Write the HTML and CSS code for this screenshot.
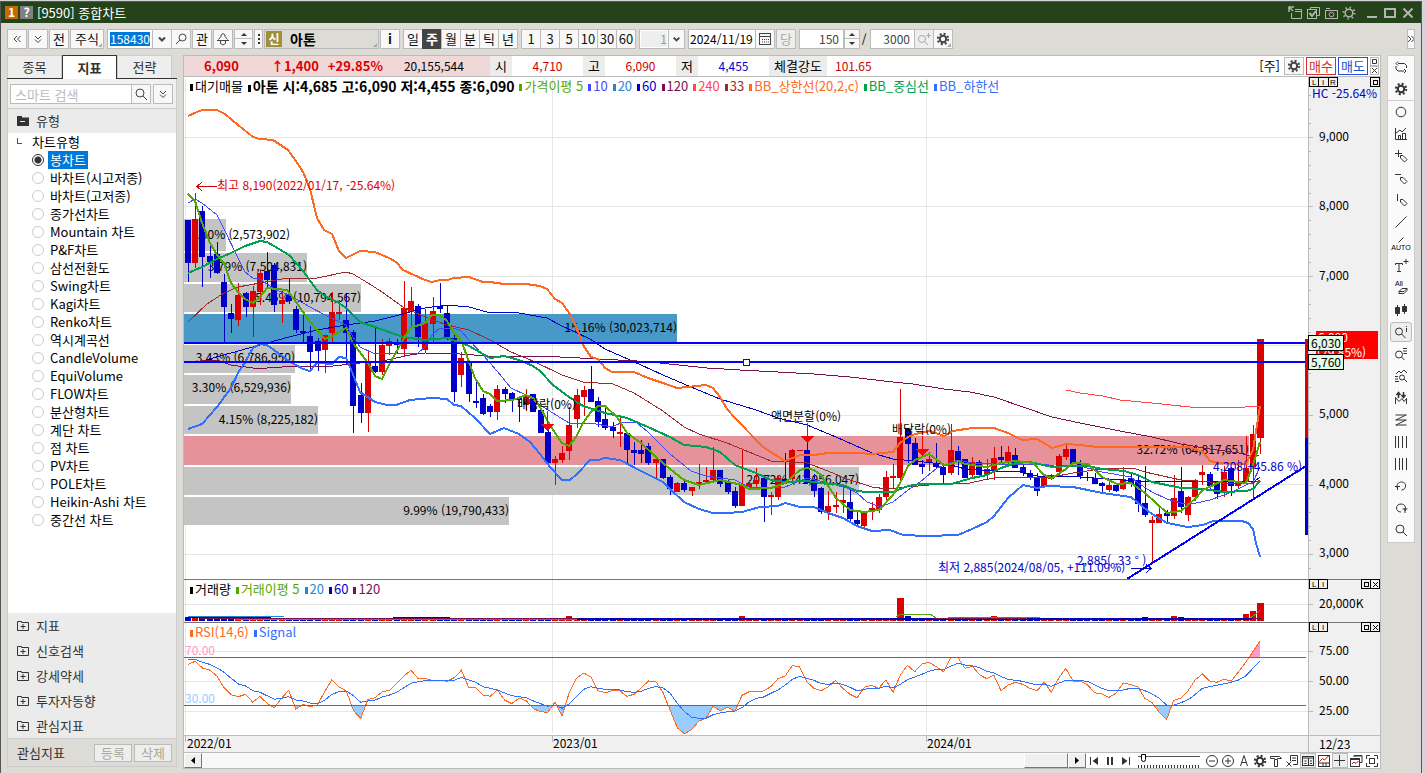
FILE: index.html
```html
<!DOCTYPE html>
<html lang="ko">
<head>
  <meta charset="UTF-8" />
  <meta name="viewport" content="width=device-width, initial-scale=1.0"/>
  <title>[9590] 종합차트</title>
  <link rel="stylesheet" href="styles.css">
</head>

<body>
  <!-- icon set -->
  <svg class="defs" width="0" height="0">
    <symbol id="gear" viewBox="0 0 16 16"><circle cx="8" cy="8" r="3.2" stroke-width="2"/><circle cx="8" cy="8" r="5.2" stroke-width="2" stroke-dasharray="2.04 2.04"/></symbol>
    <symbol id="gear-thin" viewBox="0 0 16 16"><circle cx="8" cy="8" r="3.8" stroke-width="1.5"/><circle cx="8" cy="8" r="5.6" stroke-width="2" stroke-dasharray="1.4 3"/></symbol>
    <symbol id="search" viewBox="0 0 16 16"><circle cx="7" cy="7" r="4"/><path d="M10 10l4 4"/></symbol>
    <symbol id="search-l" viewBox="0 0 16 16"><circle cx="9.500" cy="6.500" r="3.500"/><path d="M7 9l-4 4"/></symbol>
    <symbol id="search-plus" viewBox="0 0 16 16"><circle cx="6" cy="8" r="3.500"/><path d="M8.500 10.500l3.500 3.500M12.500 2v5M10 4.500h5"/></symbol>
    <symbol id="left2" viewBox="0 0 16 16"><path d="M8 5L5 8l3 3M11.500 5l-3 3 3 3"/></symbol>
    <symbol id="right2" viewBox="0 0 16 16"><path d="M5 5l3 3-3 3M8.500 5l3 3-3 3"/></symbol>
    <symbol id="down2" viewBox="0 0 16 16"><path d="M5 5l3 3 3-3M5 8.500l3 3 3-3"/></symbol>
    <symbol id="chev" viewBox="0 0 16 16"><path d="M5 6.500l3 3 3-3" stroke-width="2"/></symbol>
    <symbol id="hand" viewBox="0 0 16 16"><path d="M3.500 8.500L6 5.500V4l2-1.500L10 4v1.500l2.500 3M2 9.500h12M5.500 10v2.500l2.500 1.500 2.500-1.500V10"/></symbol>
    <symbol id="cal" viewBox="0 0 16 16"><rect x="2.500" y="2.500" width="11" height="11"/><path d="M5 8.500h7M5 11h7" stroke-dasharray="1 1"/><path d="M2 5.500h12"/></symbol>
    <symbol id="send" viewBox="0 0 16 16"><path d="M2 7V2h5M2 2l4 4" stroke-width="1.500"/><path d="M4.500 8v5.500h10v-9H8M8 6.500h6" /></symbol>
    <symbol id="copycheck" viewBox="0 0 16 16"><path d="M5.500 4V2.500h9v8H12"/><rect x="2.500" y="4.500" width="9" height="9"/><path d="M4.500 8l2.500 3 4-5" stroke-width="2"/></symbol>
    <symbol id="camera" viewBox="0 0 16 16"><rect x="2.500" y="5.500" width="12" height="8"/><path d="M3 3.500h4"/><circle cx="8.500" cy="9.500" r="2.300"/></symbol>
    <symbol id="rotate" viewBox="0 0 16 16"><path d="M5 4.500h6.500l2 2V9M5 2.500l-2 2 2 2M3 7v3l2 2h6M11 10l2 2-2 2"/></symbol>
    <symbol id="ring" viewBox="0 0 16 16"><circle cx="8" cy="8" r="4.800"/></symbol>
    <symbol id="bars" viewBox="0 0 16 16"><path d="M2.500 2v11.500H14M5.500 13V9.500h2V13M9.500 13V7.500h3V13M3 7l4-3 2 2 4-4"/></symbol>
    <symbol id="penplus" viewBox="0 0 16 16"><path d="M2 5.500h7M5.500 2v7"/><path d="M7.500 7.500h2.500l4 4-2.500 2.500-4-4z"/></symbol>
    <symbol id="penline" viewBox="0 0 16 16"><path d="M2 4.500h6M7.500 7.500h2.500l4 4-2.500 2.500-4-4z"/></symbol>
    <symbol id="penbar" viewBox="0 0 16 16"><path d="M4.500 2v7M7.500 7.500h2.500l4 4-2.500 2.500-4-4z"/></symbol>
    <symbol id="slash" viewBox="0 0 16 16"><path d="M2.500 13.500L13.500 2.500"/></symbol>
    <symbol id="candle" viewBox="0 0 16 16"><path d="M4.500 3v11M11.500 2v10"/><path d="M2.500 5.500h4v6h-4zM9.500 4.500h4v5h-4z" fill="currentColor"/></symbol>
    <symbol id="search-i" viewBox="0 0 16 16"><circle cx="6" cy="7.500" r="3.500"/><path d="M8.500 10l4 4M13.500 2v1M13.500 4v4"/></symbol>
    <symbol id="search-list" viewBox="0 0 16 16"><circle cx="6" cy="8.500" r="3.500"/><path d="M8.500 11l3 3M10 2.500h4M10 5h4M10.500 7.500H14"/></symbol>
    <symbol id="search-wave" viewBox="0 0 16 16"><path d="M3 6l3-3 2 2 3-3 3 3M2 8.500h3M2 11h3M2 13.500h4"/><circle cx="9" cy="9.500" r="2.500"/><path d="M11 11l3 3"/></symbol>
    <symbol id="updown" viewBox="0 0 16 16"><path d="M5.500 8V2.500M3.500 5l2-2.500 2 2.500M10.500 2v5.500M8.500 5l2 2.500 2-2.500" stroke-width="1.500"/><path d="M2.500 14V7.500l3.500 4 3-3 2 3 2.500-3V14"/></symbol>
    <symbol id="zz" viewBox="0 0 16 16"><path d="M2.500 3h11M2.500 8h11M2.500 13h11M13 3L3 8M13 8L3 13"/></symbol>
    <symbol id="v4" viewBox="0 0 16 16"><path d="M2.500 2v12M5.500 2v12M9.500 2v12M13.500 2v12"/></symbol>
    <symbol id="v5" viewBox="0 0 16 16"><path d="M2.500 2v12M6.500 2v12M9.500 2v12M13.500 2v12"/></symbol>
    <symbol id="undo" viewBox="0 0 16 16"><path d="M4.500 10.500c-1.500-4 1-6.500 4-6.500 6 0 5 8 0 8M2 8.500h5M4.500 8v4"/></symbol>
    <symbol id="redo" viewBox="0 0 16 16"><path d="M8 12C2 12 2 4 8 4c3.500 0 5.500 3 4 7M9.500 9h5M12 8v5"/></symbol>
    <symbol id="folder" viewBox="0 0 16 16"><path d="M2.500 3.500h4v1h7v8h-11zM8 6v5M5.500 8.500h5"/></symbol>
    <symbol id="folder-open" viewBox="0 0 16 16"><path d="M2 3h5v1.500h7V13H2z" fill="currentColor" stroke="none"/><path d="M5 8.500h5" stroke="#ebebeb"/></symbol>
    <symbol id="minus" viewBox="0 0 16 16"><circle cx="8" cy="8" r="5.500"/><path d="M5 8h6"/></symbol>
    <symbol id="plus" viewBox="0 0 16 16"><circle cx="8" cy="8" r="5.500"/><path d="M5 8h6M8 5v6"/></symbol>
    <symbol id="compass" viewBox="0 0 16 16"><path d="M8 2.500L4.500 13M8 2.500L11.500 13M5.500 9.500h5"/></symbol>
    <symbol id="hammer" viewBox="0 0 16 16"><path d="M2.500 5.500v-2h9l2 2h-4v1h-3v-1zM6.500 7v6.500h3V7"/></symbol>
    <symbol id="sheet" viewBox="0 0 16 16"><path d="M6.500 8V2.500h7v9H9M8 5h4M8 7.500h4M2.500 8.500l5 5M7.500 8.500l-5 5"/></symbol>
    <symbol id="panel" viewBox="0 0 16 16"><rect x="2.500" y="3.500" width="11" height="9"/><path d="M2.500 5h11M8.500 5v8M4.500 8h2M4.500 10.500h2M10 8h2M10 10.500h2"/></symbol>
    <symbol id="minichart" viewBox="0 0 16 16"><rect x="2.500" y="2.500" width="11" height="11"/><path d="M3 10h10M7 10v3M10 10v3"/><path d="M3.500 8.500l3-3 2 1.500 4-4" stroke="#c00"/></symbol>
    <symbol id="cross" viewBox="0 0 16 16"><path d="M7.500 2v11M2 7.500h11"/></symbol>
    <symbol id="cascade" viewBox="0 0 16 16"><path d="M6 4V2.500h8v7h-2M6 3h8"/><rect x="2.500" y="5.500" width="9" height="8"/><path d="M3 6.500h8"/><path d="M4 11l2-2 2 1.500L10.500 8" stroke="#c00"/></symbol>
    <symbol id="expand" viewBox="0 0 16 16"><path d="M2.500 6V2.500H6M10 2.500h3.500V6M13.500 10v3.500H10M6 13.500H2.500V10"/><rect x="5.500" y="5.500" width="5" height="5"/></symbol>
  </svg>

  <div class="window">
    <header class="titlebar">
      <span class="badge orange">1</span>
      <span class="badge gray">?</span>
      <h1>[9590] 종합차트</h1>
      <div class="window-buttons">
        <button aria-label="내보내기"><svg><use href="#send"/></svg></button>
        <button aria-label="화면복사"><svg><use href="#copycheck"/></svg></button>
        <button aria-label="캡처"><svg><use href="#camera"/></svg></button>
        <button aria-label="설정"><svg><use href="#gear-thin"/></svg></button>
        <button class="min" aria-label="최소화"><svg viewBox="0 0 16 16"><path d="M3 12h10" stroke-width="2"/></svg></button>
        <button aria-label="최대화"><svg viewBox="0 0 16 16"><path d="M3 4h10v8H3z" stroke-width="2"/></svg></button>
        <button aria-label="닫기"><svg viewBox="0 0 16 16"><path d="M3.500 3.500l9 9M12.500 3.500l-9 9" stroke-width="2"/></svg></button>
      </div>
    </header>

    <div class="toolbar">
      <button class="btn" aria-label="접기"><svg><use href="#left2"/></svg></button>
      <button class="btn" aria-label="펼치기"><svg><use href="#down2"/></svg></button>
      <button class="btn">전</button>
      <button class="btn stock corner">주식</button>
      <div class="group">
        <div class="field code"><input type="text" value="158430" aria-label="종목코드"></div>
        <button class="btn" aria-label="목록"><svg><use href="#chev"/></svg></button>
        <button class="btn" aria-label="종목검색"><svg><use href="#search-l"/></svg></button>
      </div>
      <button class="btn">관</button>
      <button class="btn" aria-label="이동"><svg><use href="#hand"/></svg></button>
      <div class="spin"><button aria-label="위"></button><button aria-label="아래"></button></div>
      <button class="btn dots" aria-label="더보기"><i></i><i></i><i></i></button>
      <div class="name corner"><b>신</b><strong>아톤</strong></div>
      <button class="btn info-btn">i</button>
      <div class="group period">
        <button class="btn">일</button><button class="btn on">주</button><button class="btn">월</button><button class="btn">분</button><button class="btn">틱</button><button class="btn">년</button>
      </div>
      <div class="group period">
        <button class="btn">1</button><button class="btn">3</button><button class="btn">5</button><button class="btn">10</button><button class="btn">30</button><button class="btn">60</button>
      </div>
      <div class="group">
        <div class="field unit"><input type="text" value="1" aria-label="주기" disabled></div>
        <button class="btn narrow" aria-label="주기 선택"><svg><use href="#chev"/></svg></button>
      </div>
      <div class="group">
        <div class="field date"><input type="text" value="2024/11/19" aria-label="날짜"></div>
        <button class="btn" aria-label="달력"><svg><use href="#cal"/></svg></button>
      </div>
      <button class="btn off">당</button>
      <div class="group">
        <div class="field count"><input type="text" value="150" aria-label="표시 개수"></div>
        <div class="spin narrow"><button aria-label="증가"></button><button aria-label="감소"></button></div>
      </div>
      <span class="per">/</span>
      <div class="group">
        <div class="field count"><input type="text" value="3000" aria-label="전체 개수"></div>
        <button class="btn off" aria-label="확대"><svg><use href="#search-plus"/></svg></button>
        <button class="btn corner" aria-label="차트설정"><svg><use href="#gear"/></svg></button>
      </div>
      <button class="btn more" aria-label="더보기"><svg><use href="#right2"/></svg></button>
    </div>

    <main>
      <aside class="sidebar">
        <nav class="tabs">
          <button>종목</button>
          <button class="on">지표</button>
          <button>전략</button>
        </nav>
        <div class="search">
          <input type="text" placeholder="스마트 검색" aria-label="스마트 검색">
          <button class="btn" aria-label="검색"><svg><use href="#search"/></svg></button>
          <button class="btn gap" aria-label="펼치기"><svg><use href="#down2"/></svg></button>
        </div>
        <div class="folder head"><svg><use href="#folder-open"/></svg>유형</div>
        <div class="tree">
          <p>차트유형</p>
          <label><input type="radio" name="type" checked><span>봉차트</span></label>
          <label><input type="radio" name="type"><span>바차트(시고저종)</span></label>
          <label><input type="radio" name="type"><span>바차트(고저종)</span></label>
          <label><input type="radio" name="type"><span>종가선차트</span></label>
          <label><input type="radio" name="type"><span>Mountain 차트</span></label>
          <label><input type="radio" name="type"><span>P&amp;F차트</span></label>
          <label><input type="radio" name="type"><span>삼선전환도</span></label>
          <label><input type="radio" name="type"><span>Swing차트</span></label>
          <label><input type="radio" name="type"><span>Kagi차트</span></label>
          <label><input type="radio" name="type"><span>Renko차트</span></label>
          <label><input type="radio" name="type"><span>역시계곡선</span></label>
          <label><input type="radio" name="type"><span>CandleVolume</span></label>
          <label><input type="radio" name="type"><span>EquiVolume</span></label>
          <label><input type="radio" name="type"><span>FLOW차트</span></label>
          <label><input type="radio" name="type"><span>분산형차트</span></label>
          <label><input type="radio" name="type"><span>계단 차트</span></label>
          <label><input type="radio" name="type"><span>점 차트</span></label>
          <label><input type="radio" name="type"><span>PV차트</span></label>
          <label><input type="radio" name="type"><span>POLE차트</span></label>
          <label><input type="radio" name="type"><span>Heikin-Ashi 차트</span></label>
          <label><input type="radio" name="type"><span>중간선 차트</span></label>
        </div>
        <div class="folder"><svg><use href="#folder"/></svg>지표</div>
        <div class="folder"><svg><use href="#folder"/></svg>신호검색</div>
        <div class="folder"><svg><use href="#folder"/></svg>강세약세</div>
        <div class="folder"><svg><use href="#folder"/></svg>투자자동향</div>
        <div class="folder"><svg><use href="#folder"/></svg>관심지표</div>
        <div class="side-foot">
          <span>관심지표</span>
          <button disabled>등록</button>
          <button disabled>삭제</button>
        </div>
      </aside>

      <section class="chart">
        <div class="quote">
          <div class="price">
            <b>6,090</b><b>↑1,400</b><b>+29.85%</b><span>20,155,544</span>
          </div>
          <span class="key">시</span><span class="val red">4,710</span>
          <span class="key">고</span><span class="val red">6,090</span>
          <span class="key">저</span><span class="val blue">4,455</span>
          <span class="key wide">체결강도</span><span class="power">101.65</span>
          <div class="order">
            <span>[주]</span>
            <button class="btn" aria-label="주문설정"><svg><use href="#gear"/></svg></button>
            <button class="buy">매수</button>
            <button class="sell">매도</button>
            <div class="tiny">
              <button aria-label="최대화"><svg viewBox="0 0 7 7"><path d="M1.500 1.500h4v4h-4z"/></svg></button>
              <button aria-label="닫기"><svg viewBox="0 0 7 7"><path d="M1 1l5 5M6 1L1 6"/></svg></button>
            </div>
          </div>
        </div>

        <div class="plot">
          <div class="legend">
            <span>대기매물</span>
            <strong>아톤 시:4,685 고:6,090 저:4,455 종:6,090</strong>
            <span class="c5">가격이평 5</span>
            <span class="c10">10</span>
            <span class="c20">20</span>
            <span class="c60">60</span>
            <span class="c120">120</span>
            <span class="c240">240</span>
            <span class="c33">33</span>
            <span class="cup">BB_상한선(20,2,c)</span>
            <span class="cmid">BB_중심선</span>
            <span class="clow">BB_하한선</span>
          </div>

          <svg class="canvas" viewBox="184 77 1196 675">
            <defs>
              <clipPath id="below30"><rect x="184" y="706" width="1124" height="29"/></clipPath>
              <clipPath id="above70"><rect x="184" y="623" width="1124" height="34"/></clipPath>
            </defs>
            <rect x="1308" y="77" width="72" height="675" fill="#f0f0f0"/>
            <rect x="184" y="736" width="1196" height="16" fill="#f0f0f0"/>
            <path class="grid" d="M184 137.500H1308M184 206.500H1308M184 276.500H1308M184 345.500H1308M184 415.500H1308M184 484.500H1308M184 554.500H1308M184 604.500H1308M184 651.500H1308M184 681.500H1308M184 711.500H1308M185.500 78V733M552.500 78V733M926.500 78V733"/>
            <path id="ticks" class="axis" d="M1308.500 77V752M184 735.500H1380M185.500 735v7M552.500 735v7M926.500 735v7"/>

            <!-- volume by price -->
            <g fill="#c4c4c4">
              <rect x="184" y="219" width="42" height="32"/>
              <rect x="184" y="253" width="123" height="29"/>
              <rect x="184" y="284" width="177" height="28"/>
              <rect x="184" y="314" width="493" height="29" fill="#4898c8"/>
              <rect x="184" y="345" width="111" height="28"/>
              <rect x="184" y="375" width="107" height="29"/>
              <rect x="184" y="406" width="134" height="28"/>
              <rect x="184" y="436" width="1065" height="29" fill="#e6929a"/>
              <rect x="184" y="467" width="675" height="28"/>
              <rect x="184" y="497" width="325" height="28"/>
            </g>
            <g text-anchor="end">
              <text x="290" y="239">1.30% (2,573,902)</text>
              <text x="307" y="271">3.79% (7,504,831)</text>
              <text x="361" y="302">5.45% (10,794,567)</text>
              <text x="677" y="332">15.16% (30,023,714)</text>
              <text x="295" y="362">3.43% (6,786,950)</text>
              <text x="291" y="392">3.30% (6,529,936)</text>
              <text x="318" y="424">4.15% (8,225,182)</text>
              <text x="1249" y="454">32.72% (64,817,651)</text>
              <text x="859" y="484">20.72% (41,056,047)</text>
              <text x="509" y="515">9.99% (19,790,433)</text>
            </g>

            <g id="candles"></g>
            <g id="averages"></g>

            <g class="event">
              <text x="517" y="409">배당락(0%)</text>
              <path d="M547.500 411v13M541 424h13l-6.500 6z"/>
              <text x="771" y="421">액면분할(0%)</text>
              <path d="M807.500 423v13M801 436h13l-6.500 6z"/>
              <text x="892" y="434">배당락(0%)</text>
              <path d="M922.500 436v13M916 449h13l-6.500 6z"/>
            </g>

            <path class="rule" d="M184 343H1308M184 362H1308M1127 579L1306 466"/>
            <rect x="743.500" y="359.500" width="6" height="6" fill="#fff" stroke="#00f"/>
            <rect x="1305" y="339" width="3" height="99" fill="#d00"/>
            <rect x="1305" y="438" width="3" height="97" fill="#00c"/>

            <g fill="#d00"><text x="217" y="190">최고 8,190(2022/01/17, -25.64%)</text><path d="M197 186.500h20M202 182l-5 4.500 5 4.500" fill="none" stroke="#d00"/></g>
            <g fill="#00c">
              <text x="938" y="572">최저 2,885(2024/08/05, +111.09%)</text>
              <text x="1077" y="565">2,885( .33 ° )</text>
              <text x="1213" y="471">4,208(+45.86 %)</text>
              <path d="M1131 568.500h20M1146 564l5 4.500-5 4.500" fill="none" stroke="#00c"/>
              <text x="1312" y="98">HC -25.64%</text>
            </g>

            <g class="scale">
              <text x="1319" y="141">9,000</text>
              <text x="1319" y="210">8,000</text>
              <text x="1319" y="280">7,000</text>
              <text x="1319" y="418">5,000</text>
              <text x="1319" y="488">4,000</text>
              <text x="1319" y="557">3,000</text>
              <text x="1319" y="608">20,000K</text>
              <text x="1319" y="655">75.00</text>
              <text x="1319" y="685">50.00</text>
              <text x="1319" y="715">25.00</text>
              <text x="1319" y="749">12/23</text>
              <text x="187" y="748">2022/01</text>
              <text x="553" y="748">2023/01</text>
              <text x="927" y="748">2024/01</text>
            </g>

            <!-- last price and level tags -->
            <rect x="1316" y="331" width="62" height="28" fill="#f00"/>
            <text x="1318" y="342" fill="#fff">6,090</text>
            <text x="1317" y="357" fill="#fff">(29.85%)</text>
            <rect class="tag" x="1308.500" y="335.500" width="35" height="15"/>
            <text x="1311" y="348">6,030</text>
            <rect class="tag" x="1308.500" y="354.500" width="35" height="15"/>
            <text x="1311" y="367">5,760</text>

            <!-- volume -->
            <g id="volume"></g>
            <path d="M200 618.500H1262" stroke="#7a1050" fill="none"/>
            <path d="M188 617.500h83M393 617.500h57" stroke="#00c" fill="none"/>
            <path d="M188 616.500h96M948 617.500h92" stroke="#1e88d8" fill="none"/>
            <path d="M235 619.500h72M896 617l5-3h29l6 4M1250 618l6-4 4-4" stroke="#52a800" fill="none"/>
            <path d="M307 619.500h270" stroke="#1e88d8" fill="none"/>
            <path d="M577 619h356M1027 619h225" stroke="#0000b8" stroke-width="2" fill="none"/>
            <path d="M933 619.500h94" stroke="#0000b8" fill="none"/>
            <path class="split" d="M184 579.500H1380M184 622.500H1380"/>

            <!-- rsi -->
            <g id="rsi"></g>
            <path d="M184 657.500H1306M184 705.500H1306" stroke="#f0f" fill="none"/>
            <text x="185" y="655" fill="#ff99cc">70.00</text>
            <text x="185" y="703" fill="#99ccff">30.00</text>

            <g class="pane-box">
              <path d="M1309.500 77.500h28v9h-28zM1318.500 78v9M1328.500 78v9M1370.500 77.500h9v9h-9zM1373 80h4v4h-4z"/>
              <path d="M1309.500 579.500h18v9h-18zM1318.500 580v9M1361.500 579.500h18v9h-18zM1370.500 580v9M1364 582h4v4h-4zM1373 582l5 5M1378 582l-5 5"/>
              <path d="M1309.500 622.500h18v9h-18zM1318.500 623v9M1361.500 622.500h18v9h-18zM1370.500 623v9M1364 625h4v4h-4zM1373 625l5 5M1378 625l-5 5"/>
              <text x="1312" y="85">L</text><text x="1322" y="85">I</text><text x="1330" y="85">R</text>
              <text x="1312" y="587">L</text><text x="1322" y="587">I</text>
              <text x="1312" y="630">L</text><text x="1322" y="630">I</text>
            </g>
          </svg>

          <div class="legend volume-legend">
            <span>거래량</span>
            <span class="c5">거래이평 5</span>
            <span class="c20">20</span>
            <span class="c60">60</span>
            <span class="c120">120</span>
          </div>
          <div class="legend rsi-legend">
            <span class="cup">RSI(14,6)</span>
            <span class="clow">Signal</span>
          </div>
        </div>

        <div class="status">
          <button class="arrow" aria-label="왼쪽"><svg viewBox="0 0 16 16"><path d="M10 4v7L6 7.500z" fill="currentColor" stroke="none"/></svg></button>
          <div class="track"><div class="thumb"></div></div>
          <button class="arrow" aria-label="오른쪽"><svg viewBox="0 0 16 16"><path d="M6 4v7l4-3.500z" fill="currentColor" stroke="none"/></svg></button>
          <button aria-label="처음"><svg viewBox="0 0 16 16"><path d="M4.500 4v8"/><path d="M12 4v8L6.500 8z" fill="currentColor" stroke="none"/></svg></button>
          <button aria-label="일시정지"><svg viewBox="0 0 16 16"><path d="M6 4v8M10 4v8" stroke-width="2"/></svg></button>
          <button aria-label="끝"><svg viewBox="0 0 16 16"><path d="M11.500 4v8"/><path d="M4 4v8l5.500-4z" fill="currentColor" stroke="none"/></svg></button>
          <input type="range" min="0" max="20" value="1" aria-label="속도">
          <button aria-label="축소"><svg><use href="#minus"/></svg></button>
          <button aria-label="확대"><svg><use href="#plus"/></svg></button>
          <button aria-label="글꼴"><svg><use href="#compass"/></svg></button>
          <button aria-label="설정"><svg><use href="#gear"/></svg></button>
          <button aria-label="도구"><svg><use href="#hammer"/></svg></button>
          <button aria-label="엑셀"><svg><use href="#sheet"/></svg></button>
          <button class="boxed" aria-label="수치표"><svg><use href="#panel"/></svg></button>
          <button aria-label="미니차트"><svg><use href="#minichart"/></svg></button>
          <button class="boxed" aria-label="십자선"><svg><use href="#cross"/></svg></button>
          <button aria-label="겹치기"><svg><use href="#cascade"/></svg></button>
          <button aria-label="전체화면"><svg><use href="#expand"/></svg></button>
        </div>
      </section>

      <nav class="tools">
        <button aria-label="새로고침"><svg><use href="#rotate"/></svg></button>
        <button class="last" aria-label="설정"><svg><use href="#gear"/></svg></button>
        <button aria-label="원"><svg><use href="#ring"/></svg></button>
        <button aria-label="지표"><svg><use href="#bars"/></svg></button>
        <button aria-label="십자 그리기"><svg><use href="#penplus"/></svg></button>
        <button aria-label="수평선"><svg><use href="#penline"/></svg></button>
        <button aria-label="수직선"><svg><use href="#penbar"/></svg></button>
        <button aria-label="추세선"><svg><use href="#slash"/></svg></button>
        <button aria-label="자동 추세선"><svg viewBox="0 0 16 16"><path d="M5.500 6.500l5-5"/><text x="8" y="14" text-anchor="middle">AUTO</text></svg></button>
        <button aria-label="텍스트"><svg viewBox="0 0 16 16"><path d="M2.500 7V5.500h7V7M6 5.500V14M4 13.500h4M13 1v5M10.500 3.500h5"/></svg></button>
        <button aria-label="전체 삭제"><svg viewBox="0 0 16 16"><text x="2" y="6">All</text><path d="M6 11.500l3-3h5v2l-3 3H6zM6 11.500h5l3-3"/></svg></button>
        <button aria-label="봉"><svg><use href="#candle"/></svg></button>
        <button class="on" aria-label="정보"><svg><use href="#search-i"/></svg></button>
        <button aria-label="목록 조회"><svg><use href="#search-list"/></svg></button>
        <button aria-label="패턴 조회"><svg><use href="#search-wave"/></svg></button>
        <button aria-label="신호"><svg><use href="#updown"/></svg></button>
        <button aria-label="되돌림"><svg><use href="#zz"/></svg></button>
        <button aria-label="시간대"><svg><use href="#v4"/></svg></button>
        <button aria-label="주기선"><svg><use href="#v5"/></svg></button>
        <button aria-label="실행취소"><svg><use href="#undo"/></svg></button>
        <button aria-label="다시실행"><svg><use href="#redo"/></svg></button>
        <button aria-label="돋보기"><svg><use href="#search"/></svg></button>
      </nav>
    </main>
  </div>

  <script src="chart.js"></script>
</body>
</html>
```

FILE: styles.css
```css
* {
  margin: 0;
  padding: 0;
  box-sizing: border-box;
}

body {
  font-family: "Noto Sans CJK KR", sans-serif;
  font-size: 12px;
  line-height: 16px;
  color: #000;
  background: #d4d4da;
  padding: 1px 3px 0 0;
}

button, input {
  font: inherit;
  color: inherit;
  border: none;
  background: none;
}

button {
  display: flex;
  align-items: center;
  justify-content: center;
}

svg {
  fill: none;
  stroke: currentColor;
}
button svg, .folder svg {
  width: 16px;
  height: 16px;
  flex: none;
}
.defs {
  position: absolute;
}

.window {
  min-height: calc(100vh - 1px);
  background: #dcdbd5;
  border: 1px solid #555;
  border-bottom: none;
  display: flex;
  flex-direction: column;
}

/* title bar */
.titlebar {
  height: 21px;
  background: #24431b;
  color: #fff;
  display: flex;
  align-items: center;
  gap: 2px;
  padding-left: 4px;
}
.titlebar h1 {
  font-size: 13px;
  font-weight: 400;
  margin-left: 2px;
}
.badge {
  width: 13px;
  height: 13px;
  line-height: 12px;
  font-weight: 700;
  text-align: center;
}
.orange {
  background: #c46a00;
}
.gray {
  background: #808080;
}
.window-buttons {
  display: flex;
  gap: 2px;
  margin-left: auto;
  margin-right: 5px;
  color: #b4b4b0;
}
.window-buttons .min {
  margin-left: 5px;
}

/* toolbar */
.toolbar {
  height: 32px;
  padding: 0 6px;
  display: flex;
  align-items: center;
  gap: 1px;
}
.btn {
  min-width: 20px;
  height: 20px;
  border: 1px solid #bbb;
  background: #f8f8f8;
  font-size: 13px;
  color: #111;
}
.btn svg {
  color: #444;
}
.group {
  display: flex;
  margin-left: 2px;
}
.group .btn {
  margin-left: -1px;
}
.group .btn:first-child {
  margin-left: 0;
}
.stock {
  width: 34px;
}
.corner {
  position: relative;
}
.corner::after {
  content: "";
  position: absolute;
  right: 1px;
  bottom: 1px;
  border: 2px solid;
  border-color: transparent #aaa #aaa transparent;
}
.field {
  height: 20px;
  border: 1px solid #bbb;
  background: #fff;
  display: flex;
  padding: 1px;
}
.field input {
  width: 100%;
  min-width: 0;
}
.code {
  width: 46px;
  padding: 2px;
}
.code input {
  background: #0078d7;
  color: #fff;
  width: 40px;
}
.unit {
  width: 30px;
}
.unit input {
  background: #eee;
  color: #999;
  text-align: right;
}
.date {
  width: 68px;
}
.count {
  width: 45px;
}
.count input {
  text-align: right;
  padding-right: 3px;
  color: #444;
}
.spin {
  width: 19px;
  height: 20px;
  display: flex;
  flex-direction: column;
}
.spin button {
  flex: 1;
  border: 1px solid #bbb;
  background: #f8f8f8;
}
.spin button::after {
  content: "";
  border: 3px solid transparent;
  border-bottom-color: #333;
  margin-top: -3px;
}
.spin button + button {
  margin-top: -1px;
}
.spin button + button::after {
  border-color: #333 transparent transparent;
  margin-top: 3px;
}
.spin.narrow {
  width: 16px;
}
.btn.narrow {
  min-width: 17px;
}
.btn.narrow svg {
  width: 15px;
}
.dots {
  min-width: 9px;
  flex-direction: column;
  gap: 2px;
}
.dots i {
  width: 2px;
  height: 2px;
  background: #333;
}
.name {
  width: 115px;
  height: 20px;
  border: 1px solid #bbb;
  display: flex;
  align-items: center;
  gap: 8px;
  padding: 1px;
}
.name b {
  width: 16px;
  background: #a0903a;
  color: #fff;
  text-align: center;
}
.name strong {
  font-size: 14px;
}
.info-btn {
  font-weight: 700;
}
.period .btn.on {
  background: #444;
  border-color: #444;
  color: #fff;
  font-weight: 700;
}
.btn.off, .btn.off svg {
  color: #aaa;
  background: #eee;
}
.per {
  width: 6px;
  text-align: center;
}
.more {
  margin-left: auto;
  min-width: 8px;
  width: 8px;
  overflow: hidden;
}

/* columns */
main {
  flex: 1;
  display: flex;
  align-items: flex-start;
  gap: 6px;
  padding: 0 6px 5px;
}

/* sidebar */
.sidebar {
  width: 170px;
  align-self: stretch;
  display: flex;
  flex-direction: column;
  margin-bottom: 2px;
  border: 1px solid #ccc;
  border-top: none;
  background: #fff;
  color: #333;
}
.tabs {
  display: flex;
  height: 24px;
  background: #dcdbd5;
  border-bottom: 1px solid #333;
  margin: 0 -1px;
}
.tabs button {
  width: 55px;
  height: 23px;
  border: 1px solid #ccc;
  border-bottom: none;
  background: #eee;
  font-size: 13px;
}
.tabs .on {
  height: 24px;
  background: #fff;
  border: 1px solid #333;
  border-bottom: none;
  font-weight: 700;
}
.search {
  display: flex;
  height: 29px;
  padding: 5px 3px 4px 2px;
  background: #f0f0f0;
}
.search input {
  flex: 1;
  min-width: 0;
  height: 20px;
  border: 1px solid #bbb;
  background: #fff;
  padding-left: 4px;
  font-size: 13px;
}
.search input::placeholder {
  color: #bbb;
}
.search .btn {
  margin-left: -1px;
}
.search .gap {
  margin-left: 2px;
}
.folder {
  height: 25px;
  display: flex;
  align-items: center;
  gap: 5px;
  padding-left: 7px;
  background: #ebebeb;
  font-size: 13px;
}
.head {
  border-top: 1px solid #ccc;
}
.tree {
  flex: 1;
  font-size: 13px;
  line-height: 18px;
  color: #000;
}
.tree p {
  padding-left: 24px;
  position: relative;
}
.tree p::before {
  content: "";
  position: absolute;
  left: 9px;
  top: 5px;
  width: 4px;
  height: 5px;
  border: 1px solid #555;
  border-width: 0 0 1px 1px;
}
.tree label {
  display: flex;
  align-items: center;
  height: 18px;
  padding-left: 24px;
  gap: 4px;
}
.tree input {
  appearance: none;
  width: 12px;
  height: 12px;
  border: 1px solid #ccc;
  border-radius: 50%;
}
.tree input:checked {
  border-color: #333;
  background: radial-gradient(#333 3px, #fff 4px);
}
.tree span {
  padding: 0 2px;
}
.tree input:checked + span {
  background: #0078d7;
  color: #fff;
}
.side-foot {
  height: 28px;
  display: flex;
  align-items: center;
  gap: 2px;
  padding: 0 4px 0 9px;
  background: #dcdbd5;
  border-top: 1px solid #ccc;
  font-size: 13px;
}
.side-foot span {
  margin-right: auto;
}
.side-foot button {
  width: 38px;
  height: 18px;
  border: 1px solid #bbb;
  background: #eee;
  color: #aaa798;
}

/* chart */
.chart {
  flex: 1;
  min-width: 0;
  border: 1px solid #bbb;
  background: #fff;
}
.quote {
  height: 21px;
  display: flex;
  line-height: 20px;
  border-bottom: 1px solid #bbb;
}
.price {
  display: flex;
  width: 306px;
  gap: 9px;
  padding-left: 20px;
  background: #f0d8d8;
}
.price b {
  color: #d00;
  font-size: 13px;
}
.price b:first-child {
  margin-right: 23px;
}
.price span {
  margin-left: 12px;
}
.key {
  width: 22px;
  text-align: center;
  background: #ececec;
  font-size: 13px;
}
.wide {
  width: 58px;
}
.val {
  width: 71px;
  text-align: center;
}
.red {
  color: #c00;
}
.blue {
  color: #00c;
}
.power {
  color: #c00;
  padding-left: 8px;
}
.order {
  margin-left: auto;
  display: flex;
  align-items: center;
  gap: 2px;
  padding-right: 1px;
}
.order .btn {
  height: 18px;
}
.order > span {
  padding-right: 2px;
  font-size: 13px;
}
.buy, .sell {
  width: 30px;
  height: 18px;
  border: 1px solid;
  font-size: 13px;
}
.buy {
  color: #d03030;
}
.sell {
  color: #2050d0;
}
.tiny button {
  width: 9px;
  height: 9px;
  border: 1px solid #bbb;
  color: #333;
}
.tiny svg {
  width: 7px;
  height: 7px;
}

.plot {
  position: relative;
}
.canvas {
  display: block;
  width: 100%;
  shape-rendering: crispEdges;
}
text {
  font-size: 12px;
  stroke: none;
  fill: #000;
}
g[fill] text {
  fill: inherit;
}
text[fill="#fff"] {
  fill: #fff;
}
text[fill="#ff99cc"] {
  fill: #ff99cc;
}
text[fill="#99ccff"] {
  fill: #99ccff;
}
.canvas rect {
  stroke: none;
}
.canvas rect[stroke] {
  stroke: #00f;
}
.canvas .tag {
  fill: #e4fce4;
  stroke: #000;
}
.grid {
  stroke: #e6e6e6;
}
.axis {
  stroke: #bbb;
}
.split {
  stroke: #777;
}
.rule {
  stroke: #00f;
  stroke-width: 2;
}
.event path {
  fill: #f00;
  stroke: #f00;
}
.pane-box {
  stroke: #000;
}
.pane-box text {
  font-family: "Liberation Sans", sans-serif;
  font-size: 8px;
}

.legend {
  position: absolute;
  top: 1px;
  left: 6px;
  display: flex;
  gap: 5px;
  font-size: 13px;
}
.legend strong {
  font-size: 14px;
}
.legend > *::before {
  content: "";
  display: inline-block;
  width: 3px;
  height: 7px;
  margin-right: 2px;
  background: currentColor;
}
.volume-legend {
  top: 504px;
}
.rsi-legend {
  top: 547px;
}
.c5 { color: #52a800; }
.c10 { color: #4848ff; }
.c20 { color: #1e88d8; }
.c60 { color: #0000cc; }
.c120 { color: #7a1050; }
.c240 { color: #ff4848; }
.c33 { color: #a02828; }
.cup { color: #ff6820; }
.cmid { color: #00a050; }
.clow { color: #3070ff; }

/* scroll bar and chart buttons */
.status {
  display: flex;
  height: 16px;
  border-top: 1px solid #bbb;
  color: #333;
}
.status button {
  width: 16px;
  height: 15px;
}
.status .arrow {
  width: 18px;
  background: #f0f0f0;
  border: 1px solid #fff;
  border-right-color: #777;
  border-bottom-color: #777;
  color: #000;
}
.track {
  flex: 1;
  background: #f8f8f8;
  display: flex;
  justify-content: flex-end;
}
.thumb {
  width: 44px;
  background: #f0f0f0;
  border: 1px solid #fff;
  border-right-color: #777;
  border-bottom-color: #777;
}
.status input {
  appearance: none;
  width: 62px;
  margin: 0 4px;
  background:
    linear-gradient(#555, #555) 0 3px / 100% 1px no-repeat,
    repeating-linear-gradient(90deg, #333 0 1px, transparent 1px 3px) 0 100% / 100% 3px no-repeat;
}
.status input::-webkit-slider-thumb {
  appearance: none;
  width: 5px;
  height: 8px;
  margin-top: -5px;
  border: 1px solid #000;
  border-radius: 0 0 3px 3px;
  background: #fff;
}
.status .boxed {
  border: 1px solid #bbb;
  background: #eee;
}

/* drawing tools */
.tools {
  width: 28px;
  display: flex;
  flex-direction: column;
  gap: 2px;
  padding: 1px 2px 2px;
  background: #fafafa;
  border: 1px solid #ccc;
}
.tools button {
  width: 22px;
  height: 20px;
  color: #333;
}
.tools .last {
  position: relative;
  margin-bottom: 1px;
}
.tools .last::after {
  content: "";
  position: absolute;
  left: -2px;
  right: -2px;
  bottom: -2px;
  border-bottom: 1px solid #ccc;
}
.tools .on {
  border: 1px solid #bbb;
  border-radius: 3px;
  background: #eee;
}
.tools svg {
  overflow: visible;
}
.tools text {
  font-family: "Liberation Sans", sans-serif;
  font-size: 7px;
}
```

FILE: chart.js
```js
const NS = 'http://www.w3.org/2000/svg';
const STEP = 7.195;
const RED = '#dd0000';
const BLUE = '#0000c8';

const xAt = (i) => 188 + i * STEP;

function add(parent, tag, attrs) {
  const el = document.createElementNS(NS, tag);
  for (const key in attrs) el.setAttribute(key, attrs[key]);
  parent.appendChild(el);
  return el;
}

// weekly candles: direction, body top, body bottom, high, low
// values are thirds of a pixel below the block's base
const blocks = [
  { base: 100, rows: `
    B 360 490 360 545,R 357 490 278 505,B 333 470 318 560,B 468 485 435 533,B 462 518 427 522
    B 546 620 522 726,B 640 656 612 698,R 585 659 549 677,B 578 620 575 650,R 573 620 558 711
    R 519 575 510 615,B 513 540 457 560,B 495 614 490 635,R 600 612 570 668,B 582 602 537 612
    B 627 690 617 698,B 693 700 645 725,B 708 755 678 806,B 722 752 714 812,R 705 749 705 818
    R 636 698 576 728,R 636 641 600 660,B 660 698 583 795,B 696 917 690 998,B 884 938 850 968
    R 787 938 752 995,B 798 815 684 820,R 735 815 718 824,R 723 738 714 765,B 731 735 717 760
    R 624 746 543 768,R 603 635 561 680,B 618 711 612 740,R 668 749 628 760,R 633 671 590 725
    B 618 627 549 640,B 640 711 618 720,B 714 875 705 906,R 774 824 757 860,B 788 881 788 906
    B 903 908 836 923,B 894 941 881 944,B 918 935 912 950,R 867 935 855 959,B 867 881 861 908
    B 879 896 876 935,B 895 899 890 965,R 884 914 867 932,B 882 935 882 935,B 930 998 925 998
    B 995 1088 990 1088,R 1077 1088 1068 1155` },
  { base: 300, rows: `
    R 459 480 438 489,R 375 453 322 480,R 285 356 266 384,R 270 290 258 348,B 267 305 198 305
    B 303 366 291 380,B 357 384 325 390,B 380 393 365 414,R 396 402 353 441,B 399 450 399 491
    B 450 458 426 494,B 450 461 420 488,B 438 488 429 494,R 477 489 477 536,B 477 533 477 536
    B 530 566 526 584,R 548 575 545 575,B 548 570 543 576,R 561 573 561 587,R 545 551 492 567
    R 540 546 500 553,R 510 540 441 549,B 510 551 510 560,B 545 575 540 581,B 572 617 560 624
    R 552 617 447 617,R 548 560 540 563,R 540 552 504 560,B 533 590 533 666,R 585 591 576 645
    R 534 590 525 600,B 537 548 459 550,R 450 537 447 540,R 449 453 449 453,B 450 549 429 553
    B 537 572 521 591,B 563 636 560 642,R 618 636 572 660,R 615 621 575 638,R 600 608 555 639
    B 606 657 567 662,B 660 671 636 680,R 639 678 633 690,R 624 630 605 660,R 591 630 581 640
    R 530 591 513 600,R 527 533 492 567,R 410 533 267 546,B 387 432 387 490,B 429 494 414 495
    B 492 500 480 522,R 477 489 456 512,B 492 500 429 505` },
  { base: 310, rows: `
    B 471 494 460 520,R 420 488 342 495,B 423 450 408 494,B 447 503 447 503,R 456 495 440 505
    B 456 495 450 500,R 478 495 447 510,R 444 480 411 510,B 441 449 408 465,R 426 455 408 470
    B 435 473 414 475,B 471 490 465 498,B 488 503 480 510,B 500 542 490 558,R 503 528 500 530
    R 495 508 492 510,R 438 487 432 500,R 417 440 405 450,B 417 462 417 462,B 462 498 450 506
    B 500 504 486 512,B 504 521 490 522,B 519 528 516 545,R 525 540 515 546,B 525 543 520 545
    R 506 536 470 540,B 503 521 488 530,B 510 581 495 605,B 579 614 467 620,R 630 638 618 755
    R 612 638 591 638,B 609 617 600 635,R 564 617 494 627,B 543 590 471 608,R 561 614 558 632
    R 510 561 507 573,R 486 494 465 525,B 492 527 486 540,B 518 552 515 568,R 486 545 468 562
    B 474 527 470 557,R 516 527 450 537,R 474 514 378 520,R 372 470 345 567,R 87 384 87 432` },
];

const candles = [];
blocks.forEach(({ base, rows }) => {
  rows.trim().split(/,|\n/).forEach((row) => {
    const [dir, ...v] = row.trim().split(' ');
    const [top, bottom, high, low] = v.map((n) => Math.round(base + n / 3));
    candles.push({ color: dir === 'R' ? RED : BLUE, top, bottom, high, low });
  });
});

const candleLayer = document.getElementById('candles');
candles.forEach((c, i) => {
  const x = Math.round(xAt(i));
  add(candleLayer, 'rect', { x, y: c.high, width: 1, height: c.low - c.high, fill: c.color });
  add(candleLayer, 'rect', { x: x - 3, y: c.top, width: i === 149 ? 7 : 6, height: Math.max(1, c.bottom - c.top), fill: c.color });
});

// moving averages and bollinger bands
const lines = [
  ['#0000cc', 1, '184,363 202,361 231,353 267,343 289,337 317,330 346,325 375,321 403,314 425,308 447,305 469,307 487,312 519,313 547,318 560,325 590,339 605,349 630,360 663,375 691,387 720,399 756,410 778,418 807,425 836,437 872,453 893,459 915,461 951,465 965,469 994,471 1020,472 1037,476 1080,477 1137,481 1210,481 1255,481 1260,477'],
  ['#7a1050', 1, '202,361 217,360 231,365 253,368 267,368 297,366 333,366 360,363 382,361 410,355 425,353 460,354 487,356 560,357 580,358 637,361 660,363 707,368 740,370 778,372 814,374 850,377 893,382 913,384 944,389 970,392 994,397 1023,407 1052,417 1080,423 1120,431 1152,437 1181,444 1210,449 1239,453 1247,455 1259,455'],
  ['#ff4848', 1, '1066,390 1080,393 1103,396 1120,400 1152,403 1190,407 1245,407 1260,406'],
  ['#a02828', 1, '188,322 207,304 224,293 238,287 260,283 287,278 317,278 346,272 353,274 368,283 382,292 403,307 425,317 447,325 469,330 490,340 511,352 533,361 562,375 583,382 613,384 634,393 663,411 684,427 699,434 727,443 749,452 771,461 807,463 828,471 847,479 872,487 887,489 907,487 940,484 970,483 983,480 1001,477 1052,477 1073,473 1107,468 1133,468 1145,472 1181,480 1210,482 1233,484 1253,483 1260,480'],
  ['#4848ff', 1, '188,203 195,199 202,203 217,215 224,229 238,258 245,272 253,278 260,279 274,289 289,295 310,307 325,315 346,325 353,337 360,347 375,354 396,353 418,353 425,347 432,335 440,328 454,328 461,331 469,340 483,355 497,371 511,388 526,395 540,405 569,423 591,423 612,427 623,422 637,423 648,432 670,454 691,471 706,476 735,480 749,487 785,487 807,478 828,483 847,488 857,493 867,502 880,507 893,502 908,490 920,482 937,468 958,460 972,463 994,464 1016,465 1044,464 1059,467 1080,466 1102,472 1131,477 1138,483 1152,492 1167,499 1181,503 1196,503 1210,500 1232,492 1246,485 1253,482 1260,467'],
  ['#ff6820', 2, '188,116 197,112 202,110 217,110 225,114 238,125 253,137 260,139 273,140 282,146 288,150 296,161 303,172 310,189 317,218 324,230 332,234 339,251 346,258 360,251 375,252 389,258 396,262 403,270 425,280 432,282 440,280 447,280 454,278 469,277 483,282 490,282 504,284 526,284 540,286 547,289 555,299 562,303 570,314 577,329 583,345 591,357 598,359 605,368 612,372 634,372 648,378 663,383 677,388 687,387 706,385 713,388 720,397 727,409 735,418 763,447 785,461 800,455 814,455 828,453 857,453 872,454 893,452 900,443 908,437 915,434 930,431 944,436 953,431 972,428 994,428 1008,433 1022,440 1037,439 1052,448 1066,444 1080,445 1097,447 1190,447 1203,452 1210,461 1220,463 1246,464 1253,450 1260,406'],
  ['#00a050', 2, '188,273 202,267 217,259 231,253 245,246 260,241 267,242 274,246 289,255 303,271 317,290 325,296 339,303 346,308 360,322 375,327 389,332 403,337 425,340 447,338 461,343 469,346 483,354 490,358 504,356 519,360 533,366 540,371 553,385 569,397 583,406 605,413 627,418 648,427 670,437 684,445 706,447 720,452 735,465 756,473 771,480 785,482 807,481 828,484 843,485 857,491 867,492 893,492 908,486 920,484 951,484 972,478 987,475 1001,468 1016,463 1030,462 1052,467 1073,466 1088,466 1102,469 1124,471 1138,475 1152,482 1167,485 1181,488 1203,489 1224,492 1246,491 1253,489 1260,481'],
  ['#3070ff', 2, '188,429 202,424 217,407 231,388 238,373 245,362 253,348 260,344 267,345 274,350 289,361 303,369 310,371 317,363 332,364 339,357 346,358 350,367 360,392 375,402 387,405 396,405 410,400 432,398 447,399 454,405 461,406 475,418 490,434 504,428 519,434 530,442 540,454 550,467 562,480 570,480 577,474 590,460 598,460 605,458 620,460 641,471 663,482 670,489 684,502 699,509 713,513 727,513 742,512 760,507 778,506 785,503 800,507 814,507 828,513 843,518 857,526 872,531 890,530 903,535 927,536 958,535 972,529 987,522 994,516 1008,498 1023,485 1037,488 1047,486 1073,487 1088,490 1102,493 1131,497 1138,503 1152,514 1167,523 1188,527 1203,525 1213,521 1242,521 1248,523 1253,529 1256,543 1260,557'],
  ['#52a800', 2, '188,194 195,201 202,223 210,243 217,255 224,263 231,283 238,292 245,299 253,303 260,297 267,288 287,290 296,302 310,322 325,339 332,336 346,328 353,343 368,363 375,376 382,379 389,365 403,340 410,328 425,323 432,315 440,315 447,321 454,333 461,340 469,362 475,378 483,391 490,394 497,401 513,400 526,395 533,398 540,407 547,420 555,433 562,443 569,446 576,437 583,423 591,412 598,406 605,406 617,417 627,433 641,443 655,456 670,469 684,480 699,485 720,480 742,485 749,489 771,488 785,483 800,470 807,468 814,470 821,475 836,498 850,510 864,512 879,510 893,495 900,483 908,466 915,460 929,454 944,465 951,464 958,461 965,464 987,467 1001,463 1016,461 1033,463 1044,475 1052,478 1066,469 1073,463 1088,464 1102,477 1117,484 1131,483 1145,493 1167,513 1181,511 1196,498 1203,490 1224,480 1246,483 1253,465 1260,442'],
];
const averageLayer = document.getElementById('averages');
lines.forEach(([stroke, width, points]) => {
  add(averageLayer, 'polyline', { points, stroke, 'stroke-width': width, fill: 'none' });
});

// volume, most weeks are flat
const spikes = { 0: 4, 1: 4, 2: 4, 53: 5, 77: 5, 99: 23, 100: 5, 106: 4, 112: 5, 133: 4, 137: 5, 138: 4, 147: 7, 148: 10, 149: 18 };
const volumeLayer = document.getElementById('volume');
candles.forEach((c, i) => {
  const height = spikes[i] || 3;
  add(volumeLayer, 'rect', { x: Math.round(xAt(i)) - 3, y: 621 - height, width: i === 99 || i === 149 ? 7 : 6, height, fill: c.color });
});

// rsi and its signal
const rsi = [
  268, 259, 279, 285, 303, 338, 359, 365, 358, 382, 364, 385, 398, 370, 346, 403, 388, 395, 390, 350,
  314, 336, 348, 407, 430, 374, 368, 350, 346, 325, 303, 286, 311, 311, 316, 316, 319, 308, 286, 337,
  338, 360, 364, 345, 375, 386, 369, 377, 401, 410, 412, 382, 422, 352, 310, 294, 306, 347, 353, 347,
  347, 364, 358, 338, 318, 319, 352, 405, 458, 476, 464, 438, 430, 394, 407, 397, 409, 361, 350, 349,
  348, 335, 311, 303, 271, 276, 320, 340, 347, 335, 316, 340, 358, 368, 337, 331, 340, 315, 352, 300,
  271, 290, 267, 262, 275, 290, 248, 248, 280, 274, 299, 311, 300, 347, 330, 322, 328, 340, 347, 322,
  352, 310, 280, 318, 319, 329, 353, 357, 367, 354, 324, 329, 335, 370, 383, 412, 434, 376, 369, 347,
  314, 297, 318, 322, 313, 318, 290, 262, 230, 198,
];
const signal = [
  253, 253, 262, 268, 278, 292, 310, 327, 333, 347, 352, 362, 373, 370, 365, 375, 378, 384, 386, 376,
  358, 350, 348, 362, 382, 378, 375, 366, 360, 352, 338, 325, 320, 317, 316, 316, 316, 316, 307, 315,
  322, 335, 340, 345, 354, 362, 365, 368, 378, 386, 394, 390, 400, 386, 365, 343, 335, 340, 343, 343,
  345, 350, 352, 349, 340, 335, 338, 355, 385, 410, 427, 430, 430, 419, 414, 410, 408, 398, 380, 370,
  366, 355, 345, 330, 313, 304, 310, 316, 326, 328, 325, 328, 337, 347, 343, 340, 340, 334, 338, 328,
  314, 306, 298, 289, 283, 284, 274, 265, 270, 272, 278, 289, 293, 305, 313, 316, 319, 325, 330, 328,
  334, 325, 316, 317, 317, 319, 330, 340, 347, 348, 345, 340, 340, 347, 357, 370, 390, 390, 383, 374,
  358, 340, 335, 331, 326, 322, 315, 303, 280, 258,
];
const toPoints = (list) => list.map((v, i) => `${xAt(i).toFixed(1)},${(575 + v / 3).toFixed(1)}`).join(' ');
const rsiLayer = document.getElementById('rsi');
const last = xAt(rsi.length - 1);
add(rsiLayer, 'polygon', { points: `188,705 ${toPoints(rsi)} ${last},705`, fill: '#99ccff', stroke: 'none', 'clip-path': 'url(#below30)' });
add(rsiLayer, 'polygon', { points: `188,657 ${toPoints(rsi)} ${last},657`, fill: '#ff99cc', stroke: 'none', 'clip-path': 'url(#above70)' });
add(rsiLayer, 'polyline', { points: toPoints(rsi), stroke: '#ff6820', fill: 'none' });
add(rsiLayer, 'polyline', { points: toPoints(signal), stroke: '#3070ff', fill: 'none' });

// minor price ticks every 200, longer ones on the thousands
let ticks = '';
for (let price = 2800; price <= 9600; price += 200) {
  const y = Math.round(554 - (price - 3000) * 0.0695) + 0.5;
  ticks += `M1308 ${y}h${price % 1000 ? 3 : 5}`;
}
const axis = document.getElementById('ticks');
axis.setAttribute('d', axis.getAttribute('d') + ticks + 'M1308 604.5h5M1308 651.5h5M1308 681.5h5M1308 711.5h5');
```
